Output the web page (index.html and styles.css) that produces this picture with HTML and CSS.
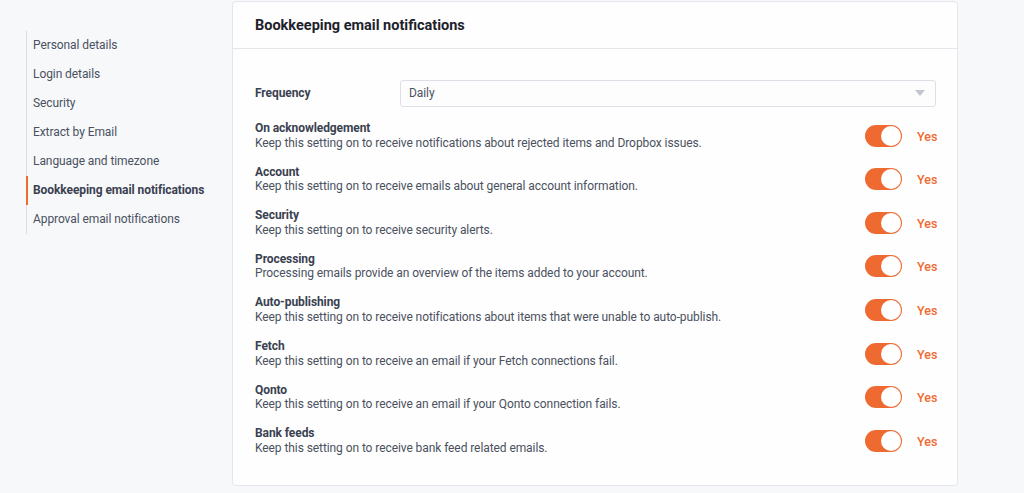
FILE: index.html
```html
<!DOCTYPE html>
<html>
<head>
<meta charset="utf-8">
<link rel="stylesheet" href="styles.css">
</head>
<body>
<div class="page">
  <nav class="sidebar">
    <a class="nav-item">Personal details</a>
    <a class="nav-item">Login details</a>
    <a class="nav-item">Security</a>
    <a class="nav-item">Extract by Email</a>
    <a class="nav-item">Language and timezone</a>
    <a class="nav-item active">Bookkeeping email notifications</a>
    <a class="nav-item">Approval email notifications</a>
  </nav>
  <section class="card">
    <header class="card-header">Bookkeeping email notifications</header>
    <div class="card-body">
      <div class="freq-row">
        <div class="freq-label">Frequency</div>
        <div class="select">
          <span>Daily</span>
          <span class="caret"></span>
        </div>
      </div>
      <div class="row">
        <div class="text"><div class="title">On acknowledgement</div><div class="desc">Keep this setting on to receive notifications about rejected items and Dropbox issues.</div></div>
        <div class="control"><span class="toggle"><span class="knob"></span></span><span class="yes">Yes</span></div>
      </div>
      <div class="row">
        <div class="text"><div class="title">Account</div><div class="desc">Keep this setting on to receive emails about general account information.</div></div>
        <div class="control"><span class="toggle"><span class="knob"></span></span><span class="yes">Yes</span></div>
      </div>
      <div class="row">
        <div class="text"><div class="title">Security</div><div class="desc">Keep this setting on to receive security alerts.</div></div>
        <div class="control"><span class="toggle"><span class="knob"></span></span><span class="yes">Yes</span></div>
      </div>
      <div class="row">
        <div class="text"><div class="title">Processing</div><div class="desc">Processing emails provide an overview of the items added to your account.</div></div>
        <div class="control"><span class="toggle"><span class="knob"></span></span><span class="yes">Yes</span></div>
      </div>
      <div class="row">
        <div class="text"><div class="title">Auto-publishing</div><div class="desc">Keep this setting on to receive notifications about items that were unable to auto-publish.</div></div>
        <div class="control"><span class="toggle"><span class="knob"></span></span><span class="yes">Yes</span></div>
      </div>
      <div class="row">
        <div class="text"><div class="title">Fetch</div><div class="desc">Keep this setting on to receive an email if your Fetch connections fail.</div></div>
        <div class="control"><span class="toggle"><span class="knob"></span></span><span class="yes">Yes</span></div>
      </div>
      <div class="row">
        <div class="text"><div class="title">Qonto</div><div class="desc">Keep this setting on to receive an email if your Qonto connection fails.</div></div>
        <div class="control"><span class="toggle"><span class="knob"></span></span><span class="yes">Yes</span></div>
      </div>
      <div class="row">
        <div class="text"><div class="title">Bank feeds</div><div class="desc">Keep this setting on to receive bank feed related emails.</div></div>
        <div class="control"><span class="toggle"><span class="knob"></span></span><span class="yes">Yes</span></div>
      </div>
    </div>
  </section>
</div>
</body>
</html>
```
FILE: styles.css
```css
* { box-sizing: border-box; }
html, body { margin: 0; padding: 0; }
body {
  background: #f7f8fa;
  font-family: Roboto, "Liberation Sans", sans-serif;
  color: #3b4252;
  width: 1024px;
  height: 493px;
  overflow: hidden;
}
.page {
  display: flex;
  align-items: flex-start;
  padding: 1px 0 0 26px;
}
.sidebar {
  width: 206px;
  margin-top: 30px;
  border-left: 1px solid #d9dce2;
  display: flex;
  flex-direction: column;
}
.nav-item {
  display: block;
  height: 29px;
  line-height: 29px;
  padding-left: 5px;
  font-size: 12px;
  letter-spacing: -0.08px;
  color: #4a5160;
  margin-left: -1px;
  border-left: 2px solid transparent;
}
.nav-item.active {
  border-left-color: #f0692f;
  font-weight: 700;
  color: #3a4150;
}
.card {
  width: 726px;
  height: 485px;
  background: #fefefe;
  border: 1px solid #e4e6eb;
  border-radius: 4px;
}
.card-header {
  height: 47px;
  line-height: 48px;
  padding-left: 22px;
  font-size: 14.5px;
  font-weight: 700;
  color: #1e222b;
  border-bottom: 1px solid #e4e6eb;
}
.card-body {
  padding: 30.5px 21px 0 22px;
  display: flex;
  flex-direction: column;
  gap: 14.6px;
}
.freq-row {
  display: flex;
  align-items: center;
  height: 27px;
}
.freq-label {
  width: 145px;
  font-size: 12px;
  letter-spacing: -0.08px;
  font-weight: 700;
  color: #3a4150;
}
.select {
  flex: 1;
  height: 27px;
  border: 1px solid #dcdfe5;
  border-radius: 3px;
  background: #fdfdfd;
  display: flex;
  align-items: center;
  justify-content: space-between;
  padding: 0 10px 0 8px;
  font-size: 12px;
  letter-spacing: -0.08px;
  color: #4a5160;
}
.caret {
  width: 0;
  height: 0;
  border-left: 5px solid transparent;
  border-right: 5px solid transparent;
  border-top: 6px solid #c2c6ce;
}
.row {
  display: flex;
  align-items: center;
  justify-content: space-between;
}
.title {
  font-size: 12px;
  letter-spacing: -0.08px;
  line-height: 14.5px;
  font-weight: 700;
  color: #3a4150;
}
.desc {
  font-size: 12px;
  letter-spacing: -0.08px;
  line-height: 14.5px;
  color: #4a5160;
}
.control {
  display: flex;
  align-items: center;
  width: 71px;
}
.toggle {
  width: 37px;
  height: 22px;
  border-radius: 11px;
  background: #ef6a30;
  position: relative;
  flex: none;
}
.knob {
  position: absolute;
  right: 1px;
  top: 1px;
  width: 20px;
  height: 20px;
  border-radius: 50%;
  background: #fff;
}
.yes {
  margin-left: 15px;
  margin-top: 1px;
  font-size: 12.5px;
  font-weight: 500;
  color: #ef6a30;
}
```
